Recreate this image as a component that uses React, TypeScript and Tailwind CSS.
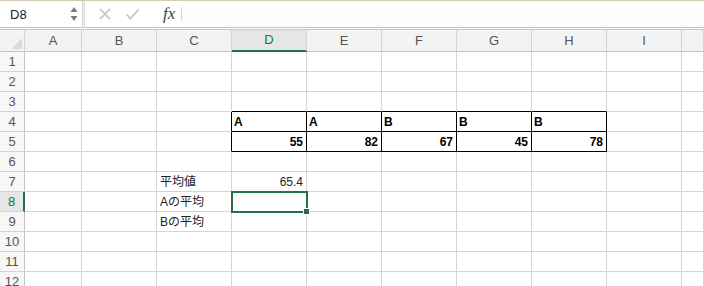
import React from "react";

type Cell = { text?: string; bold?: boolean; right?: boolean; cjk?: boolean };

const COLS = ["A", "B", "C", "D", "E", "F", "G", "H", "I", "J"];
const ROWS = Array.from({ length: 12 }, (_, i) => i + 1);

const DATA: Record<string, Cell> = {
  D4: { text: "A", bold: true },
  E4: { text: "A", bold: true },
  F4: { text: "B", bold: true },
  G4: { text: "B", bold: true },
  H4: { text: "B", bold: true },
  D5: { text: "55", bold: true, right: true },
  E5: { text: "82", bold: true, right: true },
  F5: { text: "67", bold: true, right: true },
  G5: { text: "45", bold: true, right: true },
  H5: { text: "78", bold: true, right: true },
  C7: { text: "平均値" },
  D7: { text: "65.4", right: true },
  C8: { text: "Aの平均" },
  C9: { text: "Bの平均" },
};

const TABLE_COLS = ["D", "E", "F", "G", "H"];

function cellBorderClass(col: string, row: number): string {
  const inTable = TABLE_COLS.includes(col) && (row === 4 || row === 5);
  const aboveTable = TABLE_COLS.includes(col) && row === 3;
  const leftOfTable = col === "C" && (row === 4 || row === 5);
  const r = inTable || leftOfTable ? "border-r-black" : "border-r-[#d4d4d4]";
  const b = inTable || aboveTable ? "border-b-black" : "border-b-[#d4d4d4]";
  return `${r} ${b}`;
}

const FONT = "[font-family:'Liberation_Sans','Noto_Sans_CJK_JP',sans-serif]";

export default function App() {
  return (
    <div className={`w-[704px] h-[286px] overflow-hidden bg-white text-[12px] ${FONT}`}>
      {/* top accent */}
      <div className="h-[1px] bg-[#d3cbb5]" />
      {/* formula bar */}
      <div className="flex h-[27px] border-b border-[#c4c4c4] bg-white">
        <div className="flex w-[82px] items-center justify-between pl-[10px] pr-[4px] pt-[2px] text-[13px] text-[#222]">
          <span>D8</span>
          <svg width="8" height="16" viewBox="0 0 8 16" className="mb-[2px]">
            <polygon points="4,1 7.5,6 0.5,6" fill="#7a7a7a" />
            <polygon points="4,15 7.5,10 0.5,10" fill="#7a7a7a" />
          </svg>
        </div>
        <div className="w-[3px] border-x border-[#d6d6d6] bg-[#f2f2f2]" />
        <div className="flex items-center pl-[12px]">
          <svg width="14" height="14" viewBox="0 0 14 14" className="ml-[1px]">
            <path d="M2 2 L12 12 M12 2 L2 12" stroke="#c2c2c2" strokeWidth="1.6" fill="none" />
          </svg>
          <svg width="15" height="14" viewBox="0 0 15 14" className="ml-[13px]">
            <path d="M1.5 7.5 L5.5 11.5 L13.5 2.5" stroke="#c2c2c2" strokeWidth="1.6" fill="none" />
          </svg>
          <span className="ml-[23px] text-[17px] italic text-[#444] [font-family:'Liberation_Serif',serif]">
            fx
          </span>
          <div className="ml-[6px] h-[14px] w-[1px] bg-[#d6d6d6]" />
        </div>
        <div className="flex-1 bg-[#fdfdfd]" />
      </div>
      <div className="h-[2px] border-b border-[#c8c8c8] bg-white" />

      {/* grid */}
      <div className="grid grid-cols-[25px_57px_repeat(8,75px)_1fr]">
        {/* header row */}
        <div className="relative h-[22px] border-b border-r border-b-[#c4c4c4] border-r-[#d4d4d4] bg-[#f3f3f3]">
          <svg width="10" height="11" viewBox="0 0 10 11" className="absolute bottom-[2px] right-[2px]">
            <polygon points="10,0 10,11 0,11" fill="#d9d9d9" />
          </svg>
        </div>
        {COLS.map((c) => {
          const active = c === "D";
          return (
            <div
              key={c}
              className={
                active
                  ? "flex h-[22px] items-center justify-center border-r border-b-2 border-r-[#d4d4d4] border-b-[#217346] bg-[#e6e6e6] text-[13px] text-[#217346]"
                  : "flex h-[22px] items-center justify-center border-r border-b border-r-[#d4d4d4] border-b-[#c4c4c4] bg-[#f3f3f3] text-[13px] text-[#555]"
              }
            >
              {c === "J" ? "" : c}
            </div>
          );
        })}

        {ROWS.map((r) => (
          <React.Fragment key={r}>
            <div
              className={
                r === 8
                  ? "flex h-[20px] items-center justify-center border-b border-r-2 border-b-[#d4d4d4] border-r-[#217346] bg-[#e6e6e6] text-[13px] text-[#217346]"
                  : "flex h-[20px] items-center justify-center border-b border-r border-b-[#d4d4d4] border-r-[#c4c4c4] bg-[#f7f7f7] text-[13px] text-[#555]"
              }
            >
              {r}
            </div>
            {COLS.map((c) => {
              const key = `${c}${r}`;
              const d = DATA[key];
              const selected = key === "D8";
              return (
                <div
                  key={key}
                  className={`relative flex h-[20px] items-center border-r border-b ${cellBorderClass(c, r)} ${
                    d?.right ? "justify-end pr-[3px]" : "justify-start pl-[2px]"
                  } ${d?.bold ? "font-bold text-black" : "text-[#222]"} ${c === "C" ? "pl-[3px]" : ""} ${
                    selected ? "z-10" : ""
                  }`}
                >
                  {d?.text}
                  {selected && (
                    <>
                      <div className="pointer-events-none absolute -left-[1px] -top-[1px] h-[22px] w-[77px] border-2 border-[#217346]" />
                      <div className="absolute -bottom-[4px] -right-[4px] h-[7px] w-[7px] border border-white bg-[#217346]" />
                    </>
                  )}
                </div>
              );
            })}
          </React.Fragment>
        ))}
      </div>
    </div>
  );
}
